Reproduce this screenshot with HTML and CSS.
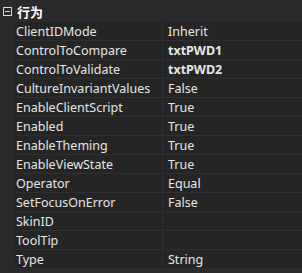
FILE: index.html
```html
<!DOCTYPE html>
<html lang="zh-CN">

<head>
    <meta charset="UTF-8">
    <title>属性</title>
    <link rel="stylesheet" href="styles.css">
</head>

<body>
    <div class="grid">
        <div class="category">
            <span class="toggle"></span>
            <span class="cat-name">行为</span>
        </div>
        <div class="row"><span class="name">ClientIDMode</span><span class="value">Inherit</span></div>
        <div class="row"><span class="name">ControlToCompare</span><span class="value bold">txtPWD1</span></div>
        <div class="row"><span class="name">ControlToValidate</span><span class="value bold">txtPWD2</span></div>
        <div class="row"><span class="name">CultureInvariantValues</span><span class="value">False</span></div>
        <div class="row"><span class="name">EnableClientScript</span><span class="value">True</span></div>
        <div class="row"><span class="name">Enabled</span><span class="value">True</span></div>
        <div class="row"><span class="name">EnableTheming</span><span class="value">True</span></div>
        <div class="row"><span class="name">EnableViewState</span><span class="value">True</span></div>
        <div class="row"><span class="name">Operator</span><span class="value">Equal</span></div>
        <div class="row"><span class="name">SetFocusOnError</span><span class="value">False</span></div>
        <div class="row"><span class="name">SkinID</span><span class="value"></span></div>
        <div class="row"><span class="name">ToolTip</span><span class="value"></span></div>
        <div class="row"><span class="name">Type</span><span class="value">String</span></div>
    </div>
</body>

</html>
```
FILE: styles.css
```css
body {
    margin: 0;
    background-color: #2a2a2c;
    font-family: "Noto Sans", "Noto Sans CJK SC", sans-serif;
    font-size: 12.5px;
    color: #e6e6e6;
}

.grid {
    width: 302px;
    height: 273px;
    overflow: hidden;
    background-color: #2a2a2c;
}

.category {
    display: flex;
    align-items: center;
    height: 22px;
}

.toggle {
    position: relative;
    width: 7px;
    height: 7px;
    margin: 0 5px 0 3px;
    border: 1px solid #d8d8d8;
}

.toggle::after {
    content: "";
    position: absolute;
    left: 1px;
    top: 3px;
    width: 5px;
    height: 1px;
    background-color: #d8d8d8;
}

.cat-name {
    font-size: 13px;
    font-weight: bold;
    color: #ffffff;
}

.row {
    display: grid;
    grid-template-columns: 149px 1fr;
    height: 19px;
    margin-left: 14px;
    padding-top: 1px;
    line-height: 17px;
    background-color: #252526;
    border-bottom: 1px solid #2f2f31;
    box-sizing: border-box;
}

.name {
    padding-left: 2px;
    border-right: 1px solid #2f2f31;
    white-space: nowrap;
}

.value {
    padding-left: 5px;
}

.bold {
    font-weight: bold;
}
```
